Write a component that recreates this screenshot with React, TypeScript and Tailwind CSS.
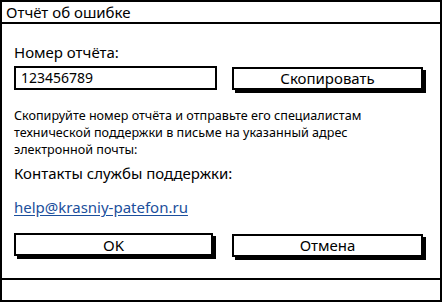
import React from "react";

const font = { fontFamily: '"Noto Sans", "Open Sans", sans-serif' };

const SketchButton: React.FC<{ label: string; width: string }> = ({ label, width }) => (
  <button
    className={`${width} h-[23px] border-2 border-black bg-white shadow-[3px_3px_0_#000] text-[15px] leading-[18px] text-black`}
  >
    {label}
  </button>
);

const App: React.FC = () => {
  return (
    <div className="w-[443px] h-[303px] bg-white" style={font}>
      <div className="w-[442px] h-[302px] border-2 border-black flex flex-col">
        <div className="h-[22px] border-b-2 border-black px-[4px] text-[15px] leading-[20px] text-black">
          Отчёт об ошибке
        </div>

        <div className="flex-1 px-[12px]">
          <div className="mt-[19px] text-[15px] leading-[18px] text-black">Номер отчёта:</div>

          <div className="mt-[5px] flex items-start">
            <div className="w-[203px] h-[24px] border-2 border-black px-[5px] text-[14px] leading-[20px] text-black">
              123456789
            </div>
            <div className="ml-[15px]">
              <SketchButton label="Скопировать" width="w-[191px]" />
            </div>
          </div>

          <p className="mt-[17px] text-[12.6px] leading-[17px] text-black">
            Скопируйте номер отчёта и отправьте его специалистам
            <br />
            технической поддержки в письме на указанный адрес
            <br />
            электронной почты:
          </p>

          <div className="mt-[6px] text-[15px] leading-[18px] text-black">Контакты службы поддержки:</div>

          <div className="mt-[16px] text-[15px] leading-[18px]">
            <a href="#" className="text-[#1b4f9c] underline underline-offset-2">
              help@krasniy-patefon.ru
            </a>
          </div>

          <div className="mt-[17px] flex items-start">
            <SketchButton label="OK" width="w-[199px]" />
            <div className="ml-[19px]">
              <SketchButton label="Отмена" width="w-[191px]" />
            </div>
          </div>
        </div>

        <div className="h-[22px] border-t-2 border-black" />
      </div>
    </div>
  );
};

export default App;
